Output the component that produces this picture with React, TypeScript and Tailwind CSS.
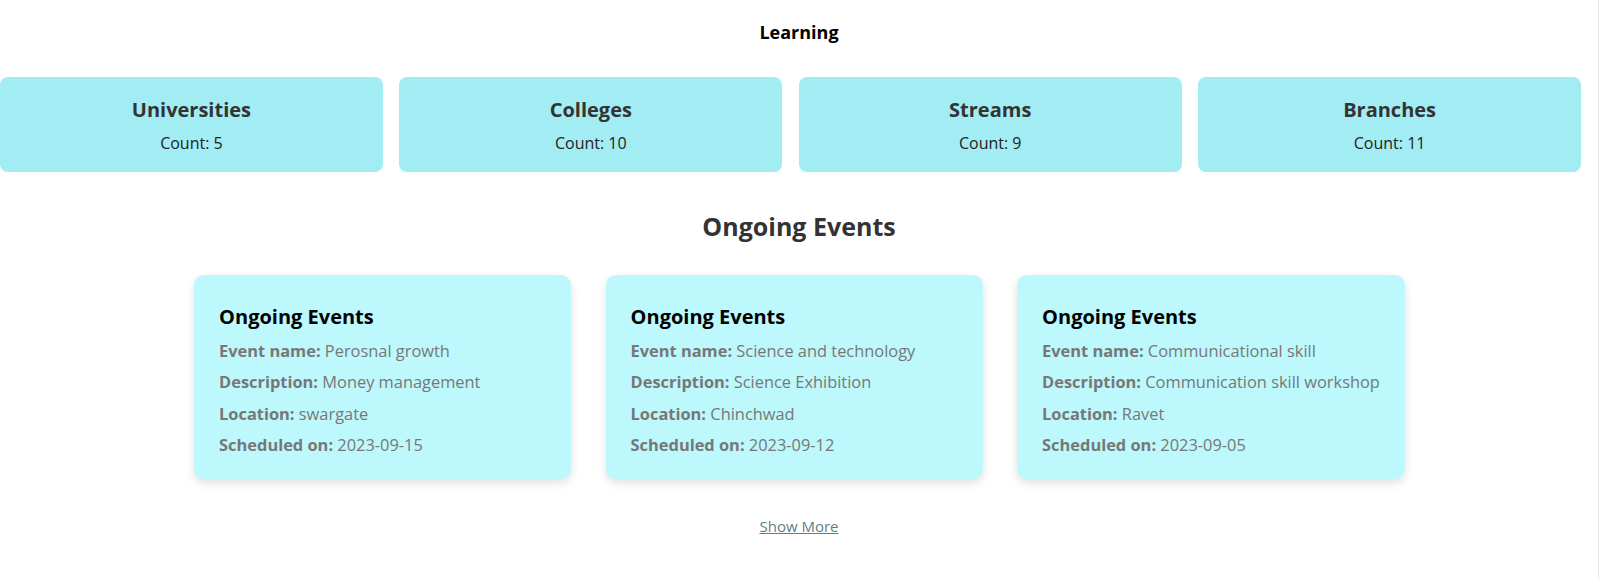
const stats = [
  { title: "Universities", count: 5 },
  { title: "Colleges", count: 10 },
  { title: "Streams", count: 9 },
  { title: "Branches", count: 11 },
];

const events = [
  {
    name: "Perosnal growth",
    description: "Money management",
    location: "swargate",
    date: "2023-09-15",
  },
  {
    name: "Science and technology",
    description: "Science Exhibition",
    location: "Chinchwad",
    date: "2023-09-12",
  },
  {
    name: "Communicational skill",
    description: "Communication skill workshop",
    location: "Ravet",
    date: "2023-09-05",
  },
];

export default function App() {
  return (
    <div
      className="h-[579px] w-full overflow-hidden bg-white"
      style={{ fontFamily: '"Open Sans", "Noto Sans", sans-serif' }}
    >
      <div className="h-full w-[1599px] border-r border-[#e6e6e6]">
        {/* Learning */}
        <h2 className="pt-[18px] text-center text-[18px] font-bold leading-[28px] text-black">
          Learning
        </h2>

        {/* Stat cards */}
        <div className="mt-[31px] grid w-[1581px] grid-cols-4 gap-[16.6px]">
          {stats.map((s) => (
            <div
              key={s.title}
              className="flex h-[95px] flex-col items-center rounded-[8px] bg-[#a2ecf4] pt-[19px] text-center"
            >
              <h3 className="text-[20px] font-bold leading-[28px] text-[#333]">
                {s.title}
              </h3>
              <p className="mt-[7px] text-[16px] leading-[24px] text-[#222]">
                Count: {s.count}
              </p>
            </div>
          ))}
        </div>

        {/* Ongoing events */}
        <h2 className="mt-[38px] text-center text-[25px] font-bold leading-[32px] text-[#333]">
          Ongoing Events
        </h2>
        <div className="mt-[33px] flex justify-center gap-[34.5px] pl-[1px]">
          {events.map((e) => (
            <div
              key={e.name}
              className="min-w-[377px] rounded-[10px] bg-[#bdf8fc] px-[25px] pb-[19px] pt-[28px] shadow-[0_4px_10px_rgba(0,0,0,0.12)]"
            >
              <h3 className="mb-[4px] text-[20px] font-bold leading-[28px] text-black">
                Ongoing Events
              </h3>
              <div className="text-[16.4px] leading-[31.3px] text-[#777]">
                <p>
                  <b>Event name:</b> {e.name}
                </p>
                <p>
                  <b>Description:</b> {e.description}
                </p>
                <p>
                  <b>Location:</b> {e.location}
                </p>
                <p>
                  <b>Scheduled on:</b> {e.date}
                </p>
              </div>
            </div>
          ))}
        </div>

        {/* Show more */}
        <div className="mt-[35px] text-center">
          <a
            href="#"
            className="text-[15px] leading-[22px] text-[#5f7f86] underline"
          >
            Show More
          </a>
        </div>
      </div>
    </div>
  );
}
